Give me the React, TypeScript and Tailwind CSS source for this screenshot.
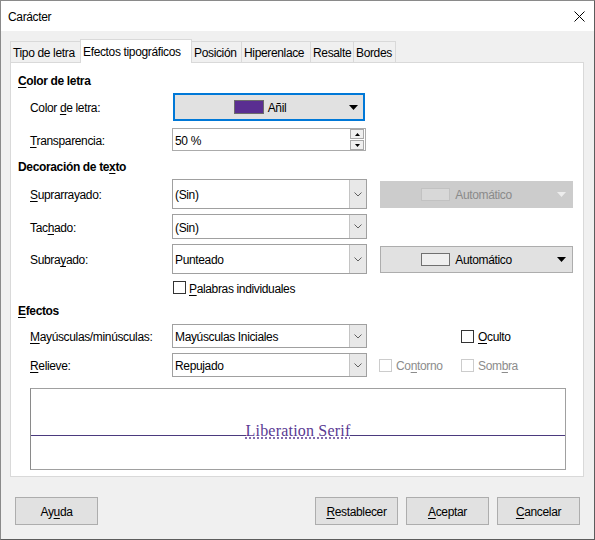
import React from "react";

const U = ({ children }: { children: React.ReactNode }) => (
  <span className="underline decoration-1 underline-offset-[2px]">{children}</span>
);

const Chevron = () => (
  <svg width="8" height="5" viewBox="0 0 8 5">
    <polyline points="0.5,0.5 4,4 7.5,0.5" fill="none" stroke="#606060" strokeWidth="1" />
  </svg>
);

const Arrow = ({ color = "#000" }: { color?: string }) => (
  <svg width="9" height="5" viewBox="0 0 9 5">
    <polygon points="0,0 9,0 4.5,5" fill={color} />
  </svg>
);

function Combo({ value }: { value: string }) {
  return (
    <div className="flex w-[195px] self-stretch border border-[#a0a0a0] bg-white">
      <div className="flex flex-1 items-center pl-[2px] pt-[2px]">{value}</div>
      <div className="flex w-[17px] items-center justify-center border-l border-[#c4c4c4] bg-[#e8e8e8]">
        <Chevron />
      </div>
    </div>
  );
}

function ColorBtn({ disabled }: { disabled?: boolean }) {
  return (
    <div
      className={
        disabled
          ? "ml-[13px] flex h-[27px] w-[193px] items-center border border-[#cccccc] bg-[#cccccc] text-[#8a8a8a]"
          : "ml-[13px] flex h-[27px] w-[193px] items-center border border-[#adadad] bg-[#e1e1e1]"
      }
    >
      <div className="flex flex-1 items-center justify-center gap-[5px] pr-[5px]">
        <div
          className={
            disabled
              ? "h-[13px] w-[29px] border border-[#c2c2c2] bg-[#d8d8d8]"
              : "h-[13px] w-[29px] border border-[#707070] bg-[#efefef]"
          }
        />
        <span className="pt-[2px]">Automático</span>
      </div>
      <div className="mr-[6px] flex items-center">
        <Arrow color={disabled ? "#ededed" : "#000"} />
      </div>
    </div>
  );
}

function Check({ disabled }: { disabled?: boolean }) {
  return (
    <div
      className={
        disabled
          ? "h-[13px] w-[13px] border border-[#cccccc] bg-white"
          : "h-[13px] w-[13px] border border-[#333333] bg-white"
      }
    />
  );
}

function Tab({ label, w, first }: { label: string; w: string; first?: boolean }) {
  return (
    <div
      className={`flex h-[21px] items-center whitespace-nowrap border-t border-r border-[#d9d9d9] bg-[#f0f0f0] pl-[2px] pt-[2px] ${w} ${
        first ? "border-l border-r-0" : ""
      }`}
    >
      {label}
    </div>
  );
}

function Btn({ children }: { children: React.ReactNode }) {
  return (
    <div className="flex h-[28px] w-[83px] items-center justify-center border border-[#adadad] bg-[#e1e1e1] pt-[2px]">
      {children}
    </div>
  );
}

export default function App() {
  return (
    <div className="flex h-[540px] w-[595px] flex-col border border-[#8a8a8a] border-r-[#5c5c5c] border-b-[#5c5c5c] bg-[#f0f0f0] font-['Liberation_Sans',sans-serif] text-[12px] tracking-[-0.35px] text-black">
      {/* Title bar */}
      <div className="flex h-[30px] shrink-0 items-center justify-between bg-white pl-[7px] pr-[9px]">
        <span className="pt-[2px]">Carácter</span>
        <svg width="11" height="11" viewBox="0 0 11 11">
          <line x1="0.5" y1="0.5" x2="10.5" y2="10.5" stroke="#000" strokeWidth="1" />
          <line x1="10.5" y1="0.5" x2="0.5" y2="10.5" stroke="#000" strokeWidth="1" />
        </svg>
      </div>

      {/* Tabs */}
      <div className="flex items-end pl-[9px] pt-[8px]">
        <Tab label="Tipo de letra" w="w-[70px]" first />
        <div className="relative z-10 mb-[-1px] flex h-[24px] w-[112px] items-center whitespace-nowrap border-x border-t border-[#d9d9d9] bg-white pl-[2px] pt-[1px]">
          Efectos tipográficos
        </div>
        <Tab label="Posición" w="w-[50px]" />
        <Tab label="Hiperenlace" w="w-[69px]" />
        <Tab label="Resalte" w="w-[43px]" />
        <Tab label="Bordes" w="w-[42px]" />
      </div>

      {/* Panel */}
      <div className="ml-[9px] flex h-[415px] w-[574px] flex-col border border-[#d9d9d9] bg-white pl-[7px]">
        <div className="mt-[9px] flex h-[16px] items-center pt-[2px] font-bold">
          <span>
            <U>C</U>olor de letra
          </span>
        </div>

        <div className="ml-[12px] mt-[5px] flex h-[28px] items-center">
          <div className="w-[142px] pt-[2px]">
            Color <U>d</U>e letra:
          </div>
          <div className="ml-[1px] flex h-[28px] w-[192px] items-center border-2 border-[#0078d7] bg-[#e1e1e1]">
            <div className="flex flex-1 items-center justify-center gap-[4px] pr-[4px]">
              <div className="h-[14px] w-[30px] border border-[#6c6c6c] bg-[#5a2e91]" />
              <span className="pt-[2px]">Añil</span>
            </div>
            <div className="mr-[5px] flex items-center">
              <Arrow />
            </div>
          </div>
        </div>

        <div className="ml-[12px] mt-[7px] flex h-[23px] items-center">
          <div className="w-[142px] pt-[2px]">
            <U>T</U>ransparencia:
          </div>
          <div className="flex h-[23px] w-[194px] items-center border border-[#ababab] bg-white pl-[2px]">
            <span className="flex-1 pt-[2px]">50 %</span>
            <div className="mr-[1px] flex flex-col gap-[1px]">
              <div className="flex h-[10px] w-[14px] items-center justify-center border border-[#a8a8a8] bg-[#f0f0f0]">
                <svg width="5" height="3" viewBox="0 0 5 3">
                  <polygon points="0,3 5,3 2.5,0" fill="#000" />
                </svg>
              </div>
              <div className="flex h-[10px] w-[14px] items-center justify-center border border-[#a8a8a8] bg-[#f0f0f0]">
                <svg width="5" height="3" viewBox="0 0 5 3">
                  <polygon points="0,0 5,0 2.5,3" fill="#000" />
                </svg>
              </div>
            </div>
          </div>
        </div>

        <div className="mt-[7px] flex h-[16px] items-center pt-[2px] font-bold">
          <span>
            Decoración de te<U>x</U>to
          </span>
        </div>

        <div className="ml-[12px] mt-[5px] flex h-[30px] items-center">
          <div className="w-[142px] pt-[2px]">
            <U>S</U>uprarrayado:
          </div>
          <Combo value="(Sin)" />
          <ColorBtn disabled />
        </div>

        <div className="ml-[12px] mt-[5px] flex h-[25px] items-center">
          <div className="w-[142px] pt-[2px]">
            Tac<U>h</U>ado:
          </div>
          <Combo value="(Sin)" />
        </div>

        <div className="ml-[12px] mt-[5px] flex h-[30px] items-center">
          <div className="w-[142px] pt-[2px]">
            Subra<U>y</U>ado:
          </div>
          <Combo value="Punteado" />
          <ColorBtn />
        </div>

        <div className="ml-[12px] mt-[6px] flex h-[15px] items-center gap-[3px] pl-[143px]">
          <Check />
          <span className="pt-[2px]">
            <U>P</U>alabras individuales
          </span>
        </div>

        <div className="mt-[7px] flex h-[16px] items-center pt-[2px] font-bold">
          <span>
            <U>E</U>fectos
          </span>
        </div>

        <div className="ml-[12px] mt-[6px] flex h-[24px] items-center">
          <div className="w-[142px] pt-[2px]">
            <U>M</U>ayúsculas/minúsculas:
          </div>
          <Combo value="Mayúsculas Iniciales" />
          <div className="ml-[94px] flex items-center gap-[4px]">
            <Check />
            <span className="pt-[2px]">
              <U>O</U>culto
            </span>
          </div>
        </div>

        <div className="ml-[12px] mt-[5px] flex h-[24px] items-center">
          <div className="w-[142px] pt-[2px]">
            <U>R</U>elieve:
          </div>
          <Combo value="Repujado" />
          <div className="ml-[12px] flex w-[82px] items-center gap-[4px] text-[#8c8c8c]">
            <Check disabled />
            <span className="pt-[2px]">
              Co<U>n</U>torno
            </span>
          </div>
          <div className="flex items-center gap-[4px] text-[#8c8c8c]">
            <Check disabled />
            <span className="pt-[2px]">
              Som<U>b</U>ra
            </span>
          </div>
        </div>

        <div className="ml-[12px] mt-[11px] flex h-[82px] w-[536px] flex-col border border-[#a0a0a0] border-l-[#8a8a8a]">
          <div className="mt-[33px] flex items-baseline leading-[18px]">
            <div className="h-px flex-1 bg-[#4b3a7e]" />
            <span className="font-['Liberation_Serif',serif] text-[16px] tracking-[0.2px] text-[#5a3a93] underline decoration-dotted decoration-[#5a3a93] underline-offset-[2px]">
              Liberation Serif
            </span>
            <div className="h-px flex-1 bg-[#4b3a7e]" />
          </div>
        </div>
      </div>

      {/* Buttons */}
      <div className="mt-[20px] flex px-[14px]">
        <Btn>
          <span>
            Ay<U>u</U>da
          </span>
        </Btn>
        <div className="flex-1" />
        <div className="flex gap-[8px]">
          <Btn>
            <span>
              <U>R</U>establecer
            </span>
          </Btn>
          <Btn>
            <span>
              <U>A</U>ceptar
            </span>
          </Btn>
          <Btn>
            <span>
              <U>C</U>ancelar
            </span>
          </Btn>
        </div>
      </div>
    </div>
  );
}
